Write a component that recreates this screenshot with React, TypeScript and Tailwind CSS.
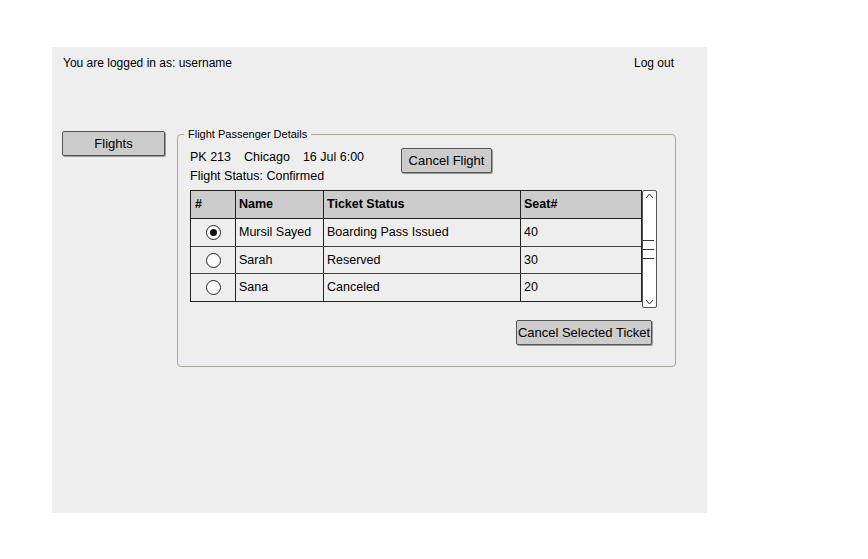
const font = { fontFamily: '"Comic Sans MS", "Liberation Sans", sans-serif' };

const rows = [
  { name: 'Mursil Sayed', status: 'Boarding Pass Issued', seat: '40', selected: true, h: 'h-[28px]' },
  { name: 'Sarah', status: 'Reserved', seat: '30', selected: false, h: 'h-[27px]' },
  { name: 'Sana', status: 'Canceled', seat: '20', selected: false, h: 'h-[27px]' },
];

function Radio({ checked }: { checked: boolean }) {
  return (
    <span className="flex h-[15px] w-[15px] items-center justify-center rounded-full border-[1.5px] border-[#222] bg-white">
      {checked && <span className="h-[7px] w-[7px] rounded-full bg-[#111]" />}
    </span>
  );
}

function SketchButton({ label, className }: { label: string; className: string }) {
  return (
    <button
      className={`flex items-center justify-center rounded-[2px] border-[1.5px] border-[#555] bg-[#cccccc] text-[13px] text-black shadow-[1px_1px_0_#999] ${className}`}
    >
      {label}
    </button>
  );
}

export default function App() {
  return (
    <div className="h-[559px] w-[868px] bg-white pl-[52px] pt-[47px] text-black" style={font}>
      <div className="h-[466px] w-[655px] bg-[#eeeeee]">
        <div className="flex justify-between pl-[11px] pr-[33px] pt-[8px] text-[12px] leading-[16px]">
          <span>You are logged in as: username</span>
          <span>Log out</span>
        </div>

        <div className="mt-[56px] flex items-start">
          <SketchButton label="Flights" className="ml-[10px] mt-[4px] h-[25px] w-[103px]" />

          <fieldset className="ml-[12px] h-[240px] w-[499px] rounded-[4px] border border-[#a9a99b] p-0">
            <legend className="ml-[6px] px-[4px] text-[11px] leading-[14px]">Flight Passenger Details</legend>

            <div className="flex pl-[12px] pt-[7px]">
              <div className="w-[211px] text-[12.5px] leading-[19px]">
                <div className="flex gap-[13px]">
                  <span>PK 213</span>
                  <span>Chicago</span>
                  <span>16 Jul 6:00</span>
                </div>
                <div>Flight Status: Confirmed</div>
              </div>
              <SketchButton label="Cancel Flight" className="h-[25px] w-[91px]" />
            </div>

            <div className="ml-[12px] mt-[4px] flex items-start">
              <div className="w-[452px] border-[1.5px] border-[#222] text-[12.5px]">
                <div className="flex h-[28px] items-center border-b-[1.5px] border-[#222] bg-[#cccccc] font-bold">
                  <div className="flex h-full w-[45px] items-center border-r border-[#222] pl-[4px]">#</div>
                  <div className="flex h-full w-[88px] items-center border-r border-[#222] pl-[3px]">Name</div>
                  <div className="flex h-full w-[197px] items-center border-r border-[#222] pl-[3px]">Ticket Status</div>
                  <div className="flex h-full flex-1 items-center pl-[3px]">Seat#</div>
                </div>
                {rows.map((r, i) => (
                  <div
                    key={r.name}
                    className={`flex ${r.h} items-center ${i < rows.length - 1 ? 'border-b border-[#444]' : ''}`}
                  >
                    <div className="flex h-full w-[45px] items-center justify-center border-r border-[#222]">
                      <Radio checked={r.selected} />
                    </div>
                    <div className="flex h-full w-[88px] items-center border-r border-[#222] pl-[3px]">{r.name}</div>
                    <div className="flex h-full w-[197px] items-center border-r border-[#222] pl-[3px]">{r.status}</div>
                    <div className="flex h-full flex-1 items-center pl-[3px]">{r.seat}</div>
                  </div>
                ))}
              </div>

              <div className="flex h-[118px] w-[15px] flex-col items-center rounded-[2px] border border-[#555] bg-white py-[1px]">
                <svg width="11" height="8" viewBox="0 0 11 8">
                  <path d="M2 6 L5.5 2 L9 6" fill="none" stroke="#333" strokeWidth="1" />
                </svg>
                <div className="mt-[40px] flex w-full flex-col gap-[8px]">
                  <span className="block h-px w-[11px] bg-[#333]" />
                  <span className="block h-px w-[11px] bg-[#333]" />
                  <span className="block h-px w-[11px] bg-[#333]" />
                </div>
                <div className="flex-1" />
                <svg width="11" height="8" viewBox="0 0 11 8">
                  <path d="M2 2 L5.5 6 L9 2" fill="none" stroke="#333" strokeWidth="1" />
                </svg>
              </div>
            </div>

            <div className="mt-[12px] flex justify-end pr-[23px]">
              <SketchButton label="Cancel Selected Ticket" className="h-[25px] w-[136px]" />
            </div>
          </fieldset>
        </div>
      </div>
    </div>
  );
}
